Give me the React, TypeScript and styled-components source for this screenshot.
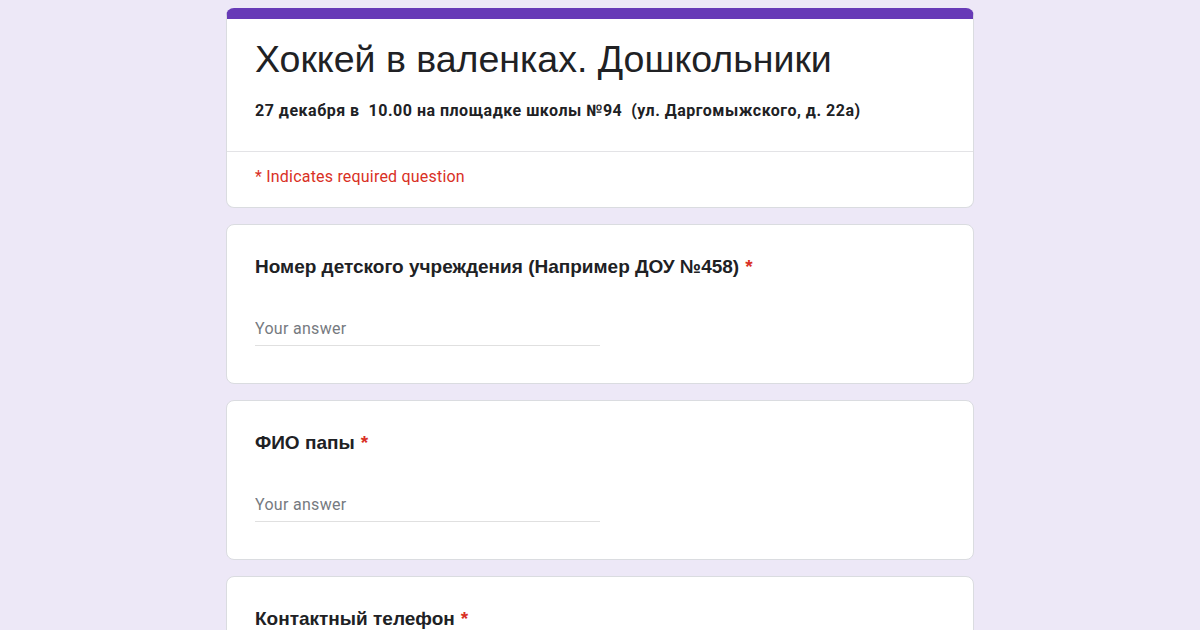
import React from "react";
import styled, { createGlobalStyle } from "styled-components";

const GlobalStyle = createGlobalStyle`
  html, body {
    margin: 0;
    padding: 0;
    background: #ede8f7;
  }
`;

const questions = [
  { id: 1, title: "Номер детского учреждения (Например ДОУ №458)", required: true },
  { id: 2, title: "ФИО папы", required: true },
  { id: 3, title: "Контактный телефон", required: true },
];

const App: React.FC = () => {
  return (
    <>
      <GlobalStyle />
      <Page>
        <Column>
          <HeaderCard>
            <HeaderTop>
              <Title>Хоккей в валенках. Дошкольники</Title>
              <Description>27 декабря в&nbsp; 10.00 на площадке школы №94&nbsp; (ул. Даргомыжского, д. 22а)</Description>
            </HeaderTop>
            <RequiredNote>* Indicates required question</RequiredNote>
          </HeaderCard>
          {questions.map((q) => (
            <QuestionCard key={q.id}>
              <QuestionTitle>
                {q.title}
                {q.required && <Star>*</Star>}
              </QuestionTitle>
              <AnswerInput placeholder="Your answer" />
            </QuestionCard>
          ))}
        </Column>
      </Page>
    </>
  );
};

export default App;

const Page = styled.div`
  width: 100%;
  height: 630px;
  overflow: hidden;
  display: flex;
  justify-content: center;
  padding-top: 8px;
  box-sizing: border-box;
`;

const Column = styled.div`
  width: 748px;
  display: flex;
  flex-direction: column;
  gap: 16px;
`;

const Card = styled.div`
  background: #ffffff;
  border: 1px solid #dadce0;
  border-radius: 8px;
  box-sizing: border-box;
  flex-shrink: 0;
`;

const HeaderCard = styled(Card)`
  height: 200px;
  border-top: 11px solid #673ab7;
  overflow: hidden;
`;

const HeaderTop = styled.div`
  padding: 17px 28px 0 28px;
  height: 133px;
  box-sizing: border-box;
  border-bottom: 1px solid #e3e3e6;
`;

const Title = styled.h1`
  margin: 0;
  font-family: "Liberation Sans", Arial, sans-serif;
  font-weight: 400;
  font-size: 37.5px;
  line-height: 46px;
  color: #202124;
`;

const Description = styled.div`
  margin-top: 19px;
  font-family: Roboto, "Noto Sans", sans-serif;
  font-weight: 700;
  font-size: 16px;
  line-height: 20px;
  letter-spacing: 0.5px;
  color: #202124;
`;

const RequiredNote = styled.div`
  padding: 14px 28px 0 28px;
  font-family: Roboto, "Noto Sans", sans-serif;
  font-size: 16px;
  line-height: 22px;
  letter-spacing: 0.2px;
  color: #d93025;
`;

const QuestionCard = styled(Card)`
  height: 160px;
  padding: 29px 28px 0 28px;
  display: flex;
  flex-direction: column;
`;

const QuestionTitle = styled.div`
  font-family: "Liberation Sans", Arial, sans-serif;
  font-weight: 700;
  font-size: 19px;
  line-height: 26px;
  color: #202124;
`;

const Star = styled.span`
  color: #d93025;
  margin-left: 6px;
`;

const AnswerInput = styled.input`
  margin-top: 38px;
  width: 345px;
  padding: 0 0 5px 0;
  border: none;
  border-bottom: 1px solid #e0e0e0;
  outline: none;
  background: transparent;
  font-family: Roboto, "Noto Sans", sans-serif;
  font-size: 16px;
  line-height: 22px;
  letter-spacing: 0.3px;
  color: #202124;

  &::placeholder {
    color: #767a80;
  }
`;
